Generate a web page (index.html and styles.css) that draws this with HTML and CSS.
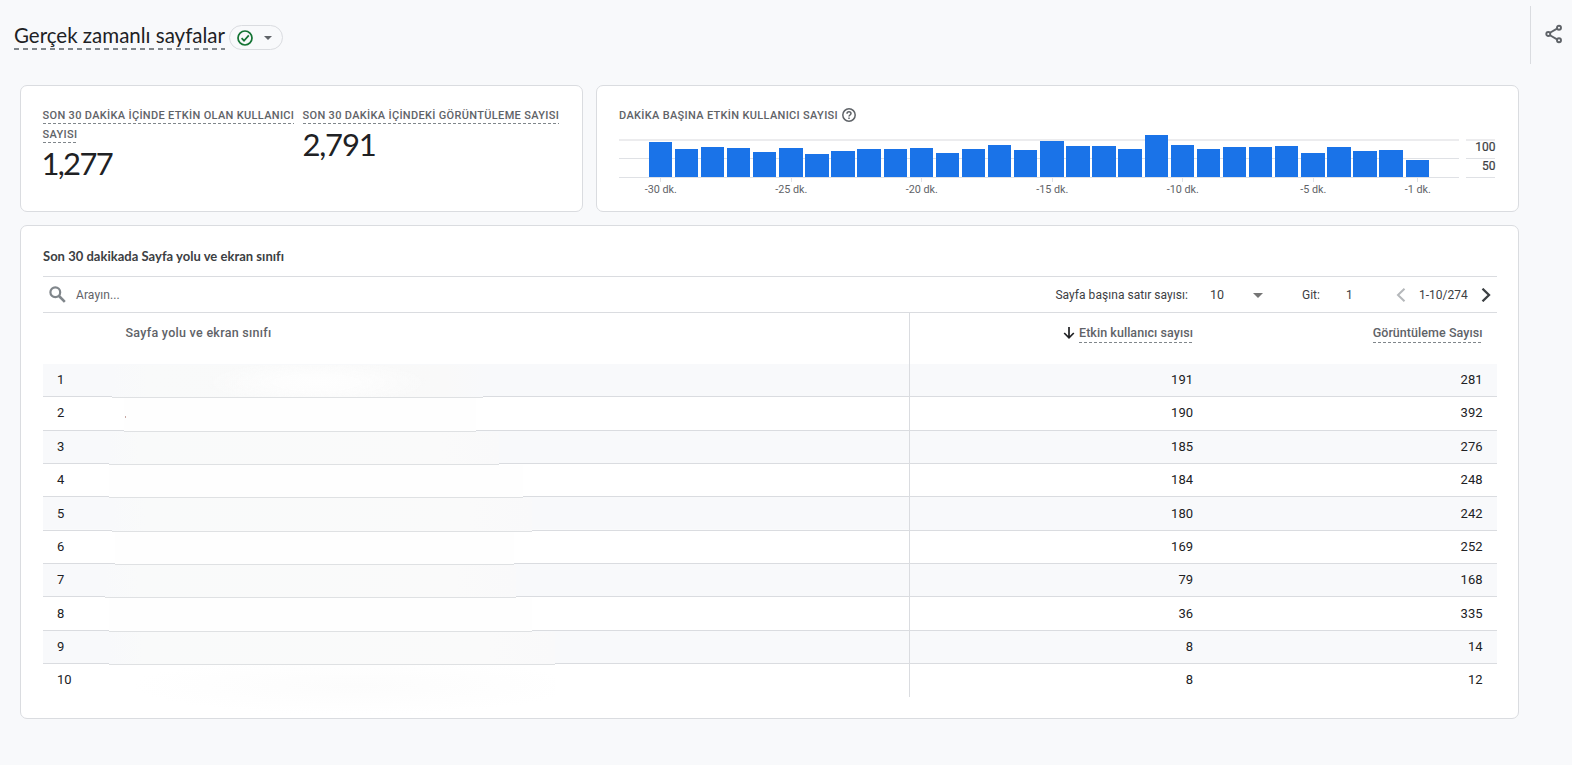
FILE: index.html
```
<!DOCTYPE html>
<html lang="tr">
<head>
<meta charset="utf-8">
<title>Gerçek zamanlı sayfalar</title>
<link rel="stylesheet" href="styles.css">
</head>
<body>
<header class="topbar">
  <h1 class="page-title">Gerçek zamanlı sayfalar</h1>
  <button class="status-pill">
    <svg width="18" height="18" viewBox="0 0 18 18" fill="none" stroke="#137333" stroke-width="1.7"><circle cx="9" cy="9" r="7"/><path d="M5.600 9.200l2.400 2.500 4.800-5.300"/></svg>
    <svg class="caret" width="8" height="4" viewBox="0 0 8 4"><path d="M0 0h8L4 4z" fill="#5f6368"/></svg>
  </button>
  <div class="share">
    <svg width="18" height="20" viewBox="0 0 18 20" fill="none" stroke="#5f6368" stroke-width="1.9"><path d="M4.5 9l8-4.600M4.500 11l8 4.600"/><circle cx="3.300" cy="10" r="2"/><circle cx="14" cy="3.700" r="2"/><circle cx="14" cy="16.300" r="2"/></svg>
  </div>
</header>
<main class="content">
  <div class="cards">
    <section class="card metrics">
      <div class="metric metric-a"><div class="label"><span class="dashed">SON 30 DAKİKA İÇİNDE ETKİN OLAN KULLANICI SAYISI</span></div><div class="value">1,277</div></div>
      <div class="metric metric-b"><div class="label"><span class="dashed">SON 30 DAKİKA İÇİNDEKİ GÖRÜNTÜLEME SAYISI</span></div><div class="value">2,791</div></div>
    </section>
    <section class="card minutes">
      <div class="label chart-label"><span>DAKİKA BAŞINA ETKİN KULLANICI SAYISI</span>
        <svg width="14" height="14" viewBox="0 0 14 14" fill="none" stroke="#5f6368" stroke-width="1.500"><circle cx="7" cy="7" r="6.200"/><path d="M5 5.700c0-1.200.9-1.900 2-1.900s2 .7 2 1.800c0 1.300-2 1.500-2 3"/><path d="M7 9.600v1.400"/></svg>
      </div>
      <svg class="chart" width="880" height="66" viewBox="619 133 880 66">
        <g class="grid">
          <rect x="619" y="139" width="840" height="2" class="soft"/><rect x="619" y="158" width="840" height="1"/><rect x="619" y="177" width="840" height="1"/>
          <rect x="1466" y="139" width="29" height="2" class="soft"/><rect x="1466" y="158" width="29" height="1"/><rect x="1466" y="177" width="29" height="1"/>
          <rect x="660" y="178" width="1" height="4"/><rect x="791" y="178" width="1" height="4"/><rect x="921" y="178" width="1" height="4"/><rect x="1052" y="178" width="1" height="4"/><rect x="1182" y="178" width="1" height="4"/><rect x="1313" y="178" width="1" height="4"/><rect x="1417" y="178" width="1" height="4"/>
        </g>
        <g class="bars">
          <rect x="649" y="142" width="23" height="35"/><rect x="675" y="149" width="23" height="28"/><rect x="701" y="147" width="23" height="30"/><rect x="727" y="148" width="23" height="29"/><rect x="753" y="152" width="23" height="25"/>
          <rect x="779" y="148" width="24" height="29"/><rect x="805" y="154" width="24" height="23"/><rect x="831" y="151" width="24" height="26"/><rect x="857" y="149" width="24" height="28"/><rect x="884" y="149" width="23" height="28"/>
          <rect x="910" y="148" width="23" height="29"/><rect x="936" y="153" width="23" height="24"/><rect x="962" y="149" width="23" height="28"/><rect x="988" y="145" width="23" height="32"/><rect x="1014" y="150" width="23" height="27"/>
          <rect x="1040" y="141" width="24" height="36"/><rect x="1066" y="146" width="24" height="31"/><rect x="1092" y="146" width="24" height="31"/><rect x="1118" y="149" width="24" height="28"/><rect x="1145" y="135" width="23" height="42"/>
          <rect x="1171" y="145" width="23" height="32"/><rect x="1197" y="149" width="23" height="28"/><rect x="1223" y="147" width="23" height="30"/><rect x="1249" y="147" width="23" height="30"/><rect x="1275" y="146" width="23" height="31"/>
          <rect x="1301" y="153" width="24" height="24"/><rect x="1327" y="147" width="24" height="30"/><rect x="1353" y="151" width="24" height="26"/><rect x="1379" y="150" width="24" height="27"/><rect x="1406" y="160" width="23" height="17"/>
        </g>
        <g class="x-labels"><text x="660.800" y="193">-30 dk.</text><text x="791.300" y="193">-25 dk.</text><text x="921.800" y="193">-20 dk.</text><text x="1052.300" y="193">-15 dk.</text><text x="1182.800" y="193">-10 dk.</text><text x="1313.300" y="193">-5 dk.</text><text x="1417.800" y="193">-1 dk.</text></g>
        <g class="y-labels"><text x="1495.500" y="151">100</text><text x="1495.500" y="170">50</text></g>
      </svg>
    </section>
  </div>
  <section class="card table-card">
    <h2 class="table-title">Son 30 dakikada Sayfa yolu ve ekran sınıfı</h2>
    <div class="toolbar">
      <svg class="search-icon" width="17" height="17" viewBox="0 0 17 17" fill="none" stroke="#80868b" stroke-width="2.200"><circle cx="6.300" cy="6.300" r="4.900"/><path d="M10 10l5.800 5.800" stroke-width="2.600"/></svg>
      <span class="placeholder">Arayın...</span>
      <span class="per-page">Sayfa başına satır sayısı:</span><span class="size">10</span>
      <svg class="size-caret" width="10" height="5" viewBox="0 0 10 5"><path d="M0 0h10L5 5z" fill="#757575"/></svg>
      <span class="goto">Git:</span><span class="goto-value">1</span>
      <svg class="prev" width="10" height="14" viewBox="0 0 10 14" fill="none" stroke="#b5b8bb" stroke-width="2"><path d="M8.500 .7L2 7l6.500 6.300"/></svg>
      <span class="range">1-10/274</span>
      <svg class="next" width="10" height="14" viewBox="0 0 10 14" fill="none" stroke="#3c4043" stroke-width="2.300"><path d="M1.500 .7L8 7l-6.500 6.300"/></svg>
    </div>
    <div class="grid-table">
      <div class="thead">
        <div class="c-name"><span>Sayfa yolu ve ekran sınıfı</span></div>
        <div class="c-users"><svg width="12" height="12" viewBox="0 0 12 12" fill="none" stroke="#202124" stroke-width="1.700"><path d="M6 0v11M1.200 6L6 10.800 10.800 6"/></svg><span class="dashed">Etkin kullanıcı sayısı</span></div>
        <div class="c-views"><span class="dashed">Görüntüleme Sayısı</span></div>
      </div>
      <div class="row odd"><div class="c-idx">1</div><div class="smudge s1"></div><div class="c-users">191</div><div class="c-views">281</div></div>
      <div class="row"><div class="c-idx">2</div><div class="smudge s2"><i class="speck"></i></div><div class="c-users">190</div><div class="c-views">392</div></div>
      <div class="row odd"><div class="c-idx">3</div><div class="smudge s3"></div><div class="c-users">185</div><div class="c-views">276</div></div>
      <div class="row"><div class="c-idx">4</div><div class="smudge s4"></div><div class="c-users">184</div><div class="c-views">248</div></div>
      <div class="row odd low"><div class="c-idx">5</div><div class="smudge s5"></div><div class="c-users">180</div><div class="c-views">242</div></div>
      <div class="row"><div class="c-idx">6</div><div class="smudge s6"></div><div class="c-users">169</div><div class="c-views">252</div></div>
      <div class="row odd"><div class="c-idx">7</div><div class="smudge s7"></div><div class="c-users">79</div><div class="c-views">168</div></div>
      <div class="row low"><div class="c-idx">8</div><div class="smudge s8"></div><div class="c-users">36</div><div class="c-views">335</div></div>
      <div class="row odd"><div class="c-idx">9</div><div class="smudge s9"></div><div class="c-users">8</div><div class="c-views">14</div></div>
      <div class="row last"><div class="c-idx">10</div><div class="smudge s10"></div><div class="c-users">8</div><div class="c-views">12</div></div>
    </div>
  </section>
</main>
</body>
</html>
```
FILE: styles.css
```
* { box-sizing: border-box; }
body { margin: 0; height: 765px; overflow: hidden; background: #f8f9fb; color: #202124; font-family: Roboto, sans-serif; }
svg { display: block; flex: none; }
.topbar { display: flex; align-items: flex-start; height: 85px; padding-left: 14px; }
.page-title { margin: 22px 0 0; width: 211px; height: 28px; white-space: nowrap; font: 400 20.500px/26px Lato, sans-serif; letter-spacing: 0;
  background: repeating-linear-gradient(90deg, #80868b 0 5px, transparent 5px 9px) left bottom / 100% 2px no-repeat; }
.status-pill { display: flex; align-items: center; gap: 10px; margin: 25px 0 0 4px; width: 54px; height: 25px; padding: 0 0 0 6px; border: 1px solid #dadce0; border-radius: 13px; background: none; }
.caret { margin-top: 1px; }
.share { margin: 6px 0 0 auto; height: 58px; width: 42px; border-left: 1px solid #dadce0; padding: 18px 0 0 14px; }
.content { padding: 0 53px 0 20px; }
.cards { display: flex; gap: 13px; height: 127px; }
.card { background: #fff; border: 1px solid #dadce0; border-radius: 7px; }
.metrics { display: flex; gap: 6px; width: 563px; padding: 20px 0 0 21.500px; }
.metric-a { width: 254px; }
.metric-b { width: 260px; }
.label { color: #5f6368; font-size: 11px; line-height: 19px; font-weight: 500; letter-spacing: .325px; }
.dashed { padding-bottom: 2px; background: repeating-linear-gradient(90deg, #80868b 0 3px, transparent 3px 5px) left bottom / 100% 1px no-repeat; -webkit-box-decoration-break: clone; box-decoration-break: clone; }
.metric-b .label { white-space: nowrap; }
.value { margin: -1px 0 0 -1px; font: 400 31px/40px Lato, sans-serif; letter-spacing: -1.700px; }
.metric-b .value { margin-left: 0; letter-spacing: -1.200px; }
.minutes { flex: 1; padding: 20px 0 0 22px; }
.chart-label { display: flex; align-items: center; gap: 3.500px; }
.chart-label svg { margin-top: -2px; }
.chart { margin-top: 8px; }
.grid rect { fill: #dfe1e5; shape-rendering: crispEdges; }
.grid .soft { fill: #ececee; }
.bars rect { fill: #1a73e8; shape-rendering: crispEdges; }
.x-labels { font-size: 10.800px; fill: #5f6368; text-anchor: middle; }
.y-labels { font-size: 12px; fill: #3c4043; stroke: #3c4043; stroke-width: .2px; text-anchor: end; }
.table-card { margin-top: 13px; height: 494px; padding: 0 21px 0 22px; }
.table-title { margin: 0; height: 50px; padding-top: 21px; font: 700 13px/18px Lato, sans-serif; letter-spacing: .02px; color: #3c4043; }
.toolbar { display: flex; align-items: center; height: 37px; border: solid #dadce0; border-width: 1px 0; padding: 1px 6px 0 6px; font-size: 12px; color: #3c4043; white-space: nowrap; }
.search-icon { margin: -2px 10px 0 0; }
.placeholder { color: #5f6368; margin-right: auto; letter-spacing: .1px; }
.per-page { letter-spacing: .04px; }
.size { width: 14px; margin: -1px 0 0 22px; font-size: 12.500px; }
.size-caret { margin-left: 29px; }
.goto { margin-left: 39px; width: 18px; }
.goto-value { width: 8px; margin-left: 26px; }
.prev { margin-left: 42px; }
.range { width: 49px; margin-left: 13px; }
.next { margin-left: 13px; }
.grid-table { width: 1454px; background: linear-gradient(#dadce0, #dadce0) 866px 0 / 1px 100% no-repeat; }
.thead, .row { display: flex; }
.thead { height: 51px; padding-top: 10px; color: #5f6368; font-size: 12.500px; line-height: 19px; font-weight: 500; }
.c-name { width: 866px; padding-left: 82.500px; letter-spacing: .28px; }
.c-users { width: 284px; display: flex; justify-content: flex-end; }
.thead .c-users svg { margin: 4px 4.500px 0 0; }
.thead .dashed { height: 20px; padding-bottom: 0; letter-spacing: .05px; }
.c-views { width: 289.500px; display: flex; justify-content: flex-end; }
.row { position: relative; height: 33.333px; border-bottom: 1px solid #dadce0; font-size: 13px; line-height: 31px; }
.row.low { line-height: 33px; }
.row.last { border-bottom: 0; }
.odd { background: linear-gradient(#f8f9fb, #f8f9fb) left / 866px 100% no-repeat, linear-gradient(#f8f9fb, #f8f9fb) 867px 0 / 587px 100% no-repeat; }
.c-idx { width: 866px; padding-left: 14px; }
/* Blurred patches over the hidden page paths */
.smudge { position: absolute; z-index: 1; top: 1px; bottom: -2px; border-bottom: 1px solid #dfe1e3; background: #fefefe; }
.odd .smudge { background: linear-gradient(90deg, #f8f9fb, #f9fafa 8%, #fafafa 85%, #f9f9fa); }
.s1 { left: 69px; width: 371px; }
.odd .s1 { background: radial-gradient(ellipse 110px 22px at 205px 55%, #fefefe, #fdfdfd 35%, #fafafa00), linear-gradient(90deg, #f8f9fb, #f9fafa 10%, #f9f9f9 90%, #f8f9fb); }
.s2 { left: 81px; width: 352px; }
.s3 { left: 66px; width: 390px; }
.s4 { left: 66px; width: 414px; }
.s5 { left: 69px; width: 420px; }
.s6 { left: 72px; width: 399px; }
.s7 { left: 62px; width: 411px; }
.s8 { left: 66px; width: 423px; }
.s9 { left: 66px; width: 446px; }
.smudge.s10 { left: 66px; width: 446px; bottom: -20px; border: 0; background: radial-gradient(ellipse 50% 55% at 55% 40%, #fcfcfc, #fff); }
.speck { display: block; margin: 18px 0 0 1px; width: 1px; height: 2px; background: #c9a9a4; }
```
